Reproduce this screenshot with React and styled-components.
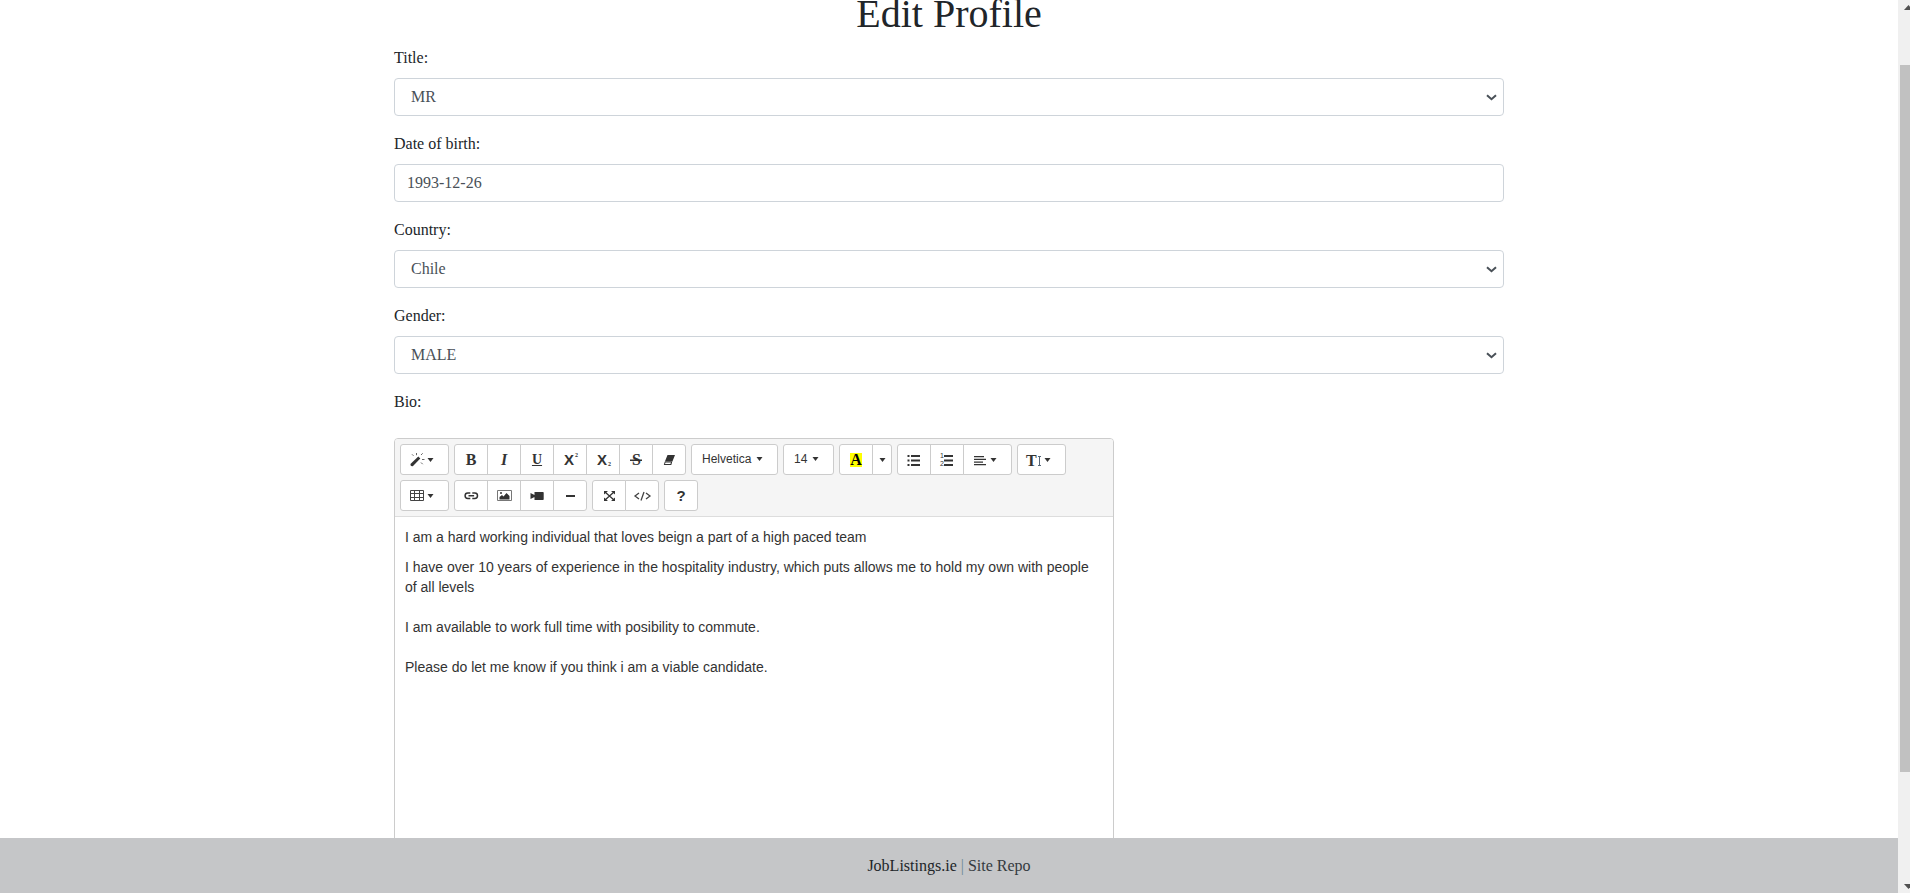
import React from "react";
import styled, { createGlobalStyle } from "styled-components";

const serif = '"Liberation Serif", "Times New Roman", serif';
const sans = '"Liberation Sans", Arial, sans-serif';

const GlobalStyle = createGlobalStyle`
  *, *::before, *::after { box-sizing: border-box; }
  body {
    margin: 0;
    background: #fff;
    color: #212529;
    font: 16px/24px ${serif};
  }
`;

const Shell = styled.div`
  display: grid;
  grid-template-columns: minmax(0, 1fr) 12px;
  height: 100vh;
  overflow: hidden;
`;

const Page = styled.div`
  display: flex;
  flex-direction: column;
  min-height: 0;
`;

const Main = styled.main`
  flex: 1;
  min-height: 0;
  overflow: hidden;
`;

const Container = styled.div`
  max-width: 1140px;
  margin: 0 auto;
  padding: 0 15px;
`;

const Heading = styled.h1`
  margin: 0 0 18px;
  font-size: 40px;
  line-height: 28px;
  font-weight: 400;
  text-align: center;
`;

const Field = styled.div`
  margin-bottom: 16px;
`;

const Label = styled.label`
  display: block;
  width: fit-content;
  margin-bottom: 8px;
`;

const Input = styled.input`
  display: block;
  width: 100%;
  height: 38px;
  padding: 6px 12px;
  border: 1px solid #ced4da;
  border-radius: 4px;
  background: #fff;
  color: #495057;
  font: 16px/24px ${serif};
`;

const Select = styled(Input).attrs({ as: "select" })`
  grid-area: 1 / 1;
  padding: 6px 32px 6px 16px;
  appearance: none;
`;

const SelectBox = styled.div`
  display: grid;
  align-items: center;
  svg {
    grid-area: 1 / 1;
    justify-self: end;
    margin-right: 7px;
    pointer-events: none;
  }
`;

const Editor = styled.div`
  max-width: 720px;
  margin-top: 24px;
  border: 1px solid #ccc;
  border-radius: 4px;
  overflow: hidden;
`;

const Toolbar = styled.div`
  display: flex;
  flex-wrap: wrap;
  gap: 5px;
  padding: 5px 40px 5px 5px;
  border-bottom: 1px solid #ddd;
  background: #f5f5f5;
`;

const Group = styled.div`
  display: flex;
`;

const ToolButton = styled.button`
  display: flex;
  align-items: center;
  justify-content: ${(p) => (p.$menu ? "flex-start" : "center")};
  gap: ${(p) => (p.$text ? 5 : 2)}px;
  width: ${(p) => p.$width || 34}px;
  height: 31px;
  padding: 0 0 ${(p) => (p.$text ? 2 : 0)}px ${(p) => (p.$menu ? (p.$text ? 10 : 8) : 0)}px;
  border: 1px solid #ccc;
  background: #fff;
  color: #333;
  font: 12px/18px ${sans};
  white-space: nowrap;
  & + & { margin-left: -1px; }
  &:first-child { border-top-left-radius: 3px; border-bottom-left-radius: 3px; }
  &:last-child { border-top-right-radius: 3px; border-bottom-right-radius: 3px; }
  svg { display: block; flex: none; }
`;

const Glyph = styled.span`
  font-family: ${(p) => (p.$sans ? sans : serif)};
  font-size: ${(p) => p.$size || 16}px;
  line-height: 16px;
  font-weight: 700;
  font-style: ${(p) => (p.$italic ? "italic" : "normal")};
  text-decoration: ${(p) => p.$line || "none"};
`;

const Swatch = styled(Glyph)`
  background: #ff0;
  color: #000;
  line-height: 14px;
`;

const Editable = styled.div`
  min-height: 400px;
  padding: 10px;
  color: #333;
  font: 14px/20px ${sans};
  outline: none;
  p { margin: 0 0 10px; }
`;

const Footer = styled.footer`
  padding: 16px 0 15px;
  background: #c5c6c8;
  color: #6c8a94;
  text-align: center;
`;

const FooterLink = styled.a`
  color: ${(p) => (p.$muted ? "#343a40" : "#212529")};
  text-decoration: none;
`;

const Scrollbar = styled.div`
  display: grid;
  grid-template-rows: 65fr 707fr 121fr;
  padding-left: 2px;
  overflow: hidden;
  background: #f0f0f0;
  svg { display: block; margin: 5px 0 0 4px; }
  svg:last-child { align-self: end; margin: 0 0 4px 4px; }
`;

const Thumb = styled.div`
  background: #c1c1c1;
`;

const Icon = ({ children }) => (
  <svg width="16" height="15" viewBox="0 0 16 15" fill="#333" overflow="visible" aria-hidden="true">
    {children}
  </svg>
);

const Caret = () => (
  <svg width="7" height="4" viewBox="0 0 7 4" fill="#333" aria-hidden="true">
    <path d="M.5 0h6L3.500 4z" />
  </svg>
);

const Chevron = () => (
  <svg width="11" height="7" viewBox="0 0 11 7" fill="none" stroke="#495057" strokeWidth="2" aria-hidden="true">
    <path d="M1 1.200l4.500 4 4.500-4" />
  </svg>
);

const MagicIcon = () => (
  <Icon>
    <path d="M9.300 4.500l2 2-7.300 7.500c-1.400 1-3.300-.9-2.300-2.300z" />
    <path d="M7.500 1v2.200M3 2.300l1.500 1.500M13.700 1.300L12 3M13 7.500h2.500M12 10.500l1.700 1.700" stroke="#666" fill="none" />
  </Icon>
);

const SupIcon = ({ sub }) => (
  <Icon>
    <text x="2" y="13" fontFamily="Liberation Sans" fontWeight="700" fontSize="15">X</text>
    <text x="13" y={sub ? 14 : 5} fontFamily="Liberation Serif" fontWeight="700" fontSize="6">2</text>
  </Icon>
);

const StrikeIcon = () => (
  <Icon>
    <text x="4" y="13" fontFamily="Liberation Serif" fontWeight="700" fontSize="16">S</text>
    <path d="M2 7.500h12v1.500H2z" />
  </Icon>
);

const EraserIcon = () => (
  <Icon>
    <path d="M6.500 3h7.500L11.300 9.800H3.800zM3.800 9.500L2.800 13h7.500l1-3.500" />
    <path d="M4.500 10.500h5.500l-.6 1.600H4z" fill="#fff" />
  </Icon>
);

const ListIcon = () => (
  <Icon>
    <path d="M1.500 3h2v2h-2zM1.500 7.500h2v2h-2zM1.500 12h2v2h-2zM5 3h9v2H5zM5 7.500h9v2H5zM5 12h9v2H5z" />
  </Icon>
);

const NumberIcon = () => (
  <Icon>
    <path d="M5 3h9v2H5zM5 7.500h9v2H5zM5 12h9v2H5z" />
    <text x="1" y="6" fontFamily="Liberation Sans" fontSize="7">1</text>
    <text x="1" y="14" fontFamily="Liberation Sans" fontSize="7">2</text>
  </Icon>
);

const AlignIcon = () => (
  <Icon>
    <path d="M2 4h10v1.300H2zM2 6.700h12V8H2zM2 9.400h9v1.300H2zM2 12h12v1.300H2z" />
  </Icon>
);

const HeightIcon = () => (
  <Icon>
    <text x="0" y="13.500" fontFamily="Liberation Serif" fontWeight="700" fontSize="16">T</text>
    <path d="M12 4.500h3M12 13.500h3M13.500 4.500v9" stroke="#567" fill="none" />
  </Icon>
);

const TableIcon = () => (
  <Icon>
    <path d="M1.500 2.500h13v10h-13zM5.500 2.500v10M10.500 2.500v10M1.500 5.500h13M1.500 9.500h13" fill="none" stroke="#444" />
  </Icon>
);

const LinkIcon = () => (
  <Icon>
    <path d="M7.300 5H4.800a2.700 2.700 0 0 0 0 5.400h2.500M9.300 5h2.500a2.700 2.700 0 0 1 0 5.400H9.300M5.500 7.700h5.600" fill="none" stroke="#333" strokeWidth="1.500" />
  </Icon>
);

const ImageIcon = () => (
  <Icon>
    <path d="M1.500 2.500h14v10h-14z" fill="#fff" stroke="#777" />
    <path d="M3.500 11.500V9l2.500-2 1.500 1.500L10.500 5l3 3v3.500z" />
    <circle cx="5" cy="5" r="1" />
  </Icon>
);

const VideoIcon = () => (
  <Icon>
    <path d="M5.500 4H14a.7.7 0 0 1 .7.7v6.600a.7.7 0 0 1-.7.7H5.500zM1.500 5L5.500 7v2l-4 2z" />
  </Icon>
);

const RuleIcon = () => (
  <Icon>
    <path d="M4 7h9v2H4z" />
  </Icon>
);

const ExpandIcon = () => (
  <Icon>
    <path d="M4 4l9 8M13 4l-9 8" stroke="#333" strokeWidth="1.300" />
    <path d="M3 3h4L3 6.500zM14 3h-4l4 3.500zM3 13h4L3 9.500zM14 13h-4l4-3.500z" />
  </Icon>
);

const CodeIcon = () => (
  <Icon>
    <path d="M5 5L1 8l4 3M12 5l4 3-4 3M10 4l-3 8.500" fill="none" stroke="#444" strokeWidth="1.300" />
  </Icon>
);

const Tool = ({ label, menu, text, width, children }) => (
  <ToolButton type="button" aria-label={label} $menu={menu} $text={text} $width={width}>
    {children}
    {menu && <Caret />}
  </ToolButton>
);

const Choice = ({ id, label, value, options }) => (
  <Field>
    <Label htmlFor={id}>{label}</Label>
    <SelectBox>
      <Select id={id} defaultValue={value}>
        {options.map((o) => <option key={o}>{o}</option>)}
      </Select>
      <Chevron />
    </SelectBox>
  </Field>
);

const BioEditor = () => (
  <Editor>
    <Toolbar role="toolbar" aria-label="Formatting">
      <Group>
        <Tool label="Style" menu width={49}><MagicIcon /></Tool>
      </Group>
      <Group>
        <Tool label="Bold"><Glyph>B</Glyph></Tool>
        <Tool label="Italic"><Glyph $italic>I</Glyph></Tool>
        <Tool label="Underline"><Glyph $size={14} $line="underline">U</Glyph></Tool>
        <Tool label="Superscript"><SupIcon /></Tool>
        <Tool label="Subscript"><SupIcon sub /></Tool>
        <Tool label="Strikethrough"><StrikeIcon /></Tool>
        <Tool label="Remove formatting"><EraserIcon /></Tool>
      </Group>
      <Group>
        <Tool label="Font family" menu text width={87}>Helvetica</Tool>
      </Group>
      <Group>
        <Tool label="Font size" menu text width={51}>14</Tool>
      </Group>
      <Group>
        <Tool label="Recent colour"><Swatch>A</Swatch></Tool>
        <Tool label="More colours" width={20}><Caret /></Tool>
      </Group>
      <Group>
        <Tool label="Unordered list"><ListIcon /></Tool>
        <Tool label="Ordered list"><NumberIcon /></Tool>
        <Tool label="Paragraph" menu width={49}><AlignIcon /></Tool>
      </Group>
      <Group>
        <Tool label="Line height" menu width={49}><HeightIcon /></Tool>
      </Group>
      <Group>
        <Tool label="Table" menu width={49}><TableIcon /></Tool>
      </Group>
      <Group>
        <Tool label="Link"><LinkIcon /></Tool>
        <Tool label="Picture"><ImageIcon /></Tool>
        <Tool label="Video"><VideoIcon /></Tool>
        <Tool label="Horizontal rule"><RuleIcon /></Tool>
      </Group>
      <Group>
        <Tool label="Full screen"><ExpandIcon /></Tool>
        <Tool label="Code view"><CodeIcon /></Tool>
      </Group>
      <Group>
        <Tool label="Help"><Glyph $sans $size={15}>?</Glyph></Tool>
      </Group>
    </Toolbar>
    <Editable
      contentEditable
      suppressContentEditableWarning
      role="textbox"
      aria-multiline="true"
      aria-labelledby="bio-label"
      spellCheck={false}
    >
      <p>I am a hard working individual that loves beign a part of a high paced team</p>
      <p>
        I have over 10 years of experience in the hospitality industry, which puts allows me to hold my own with people of all levels
        <br /><br />
        I am available to work full time with posibility to commute.
        <br /><br />
        Please do let me know if you think i am a viable candidate.
      </p>
    </Editable>
  </Editor>
);

export default function App() {
  return (
    <>
      <GlobalStyle />
      <Shell>
        <Page>
          <Main>
            <Container>
              <Heading>Edit Profile</Heading>
              <form>
                <Choice id="title" label="Title:" value="MR" options={["MR", "MRS", "MISS", "MS"]} />
                <Field>
                  <Label htmlFor="dob">Date of birth:</Label>
                  <Input id="dob" type="text" defaultValue="1993-12-26" />
                </Field>
                <Choice id="country" label="Country:" value="Chile" options={["Chile", "Ireland"]} />
                <Choice id="gender" label="Gender:" value="MALE" options={["MALE", "FEMALE"]} />
                <Field>
                  <Label as="div" id="bio-label">Bio:</Label>
                  <BioEditor />
                </Field>
              </form>
            </Container>
          </Main>
          <Footer>
            <FooterLink href="#home">JobListings.ie</FooterLink> |{" "}
            <FooterLink href="#repo" $muted>Site Repo</FooterLink>
          </Footer>
        </Page>
        <Scrollbar aria-hidden="true">
          <svg width="9" height="5" viewBox="0 0 9 5" fill="#505050"><path d="M0 5L4.500 0 9 5z" /></svg>
          <Thumb />
          <svg width="9" height="5" viewBox="0 0 9 5" fill="#505050"><path d="M0 0h9L4.500 5z" /></svg>
        </Scrollbar>
      </Shell>
    </>
  );
}
